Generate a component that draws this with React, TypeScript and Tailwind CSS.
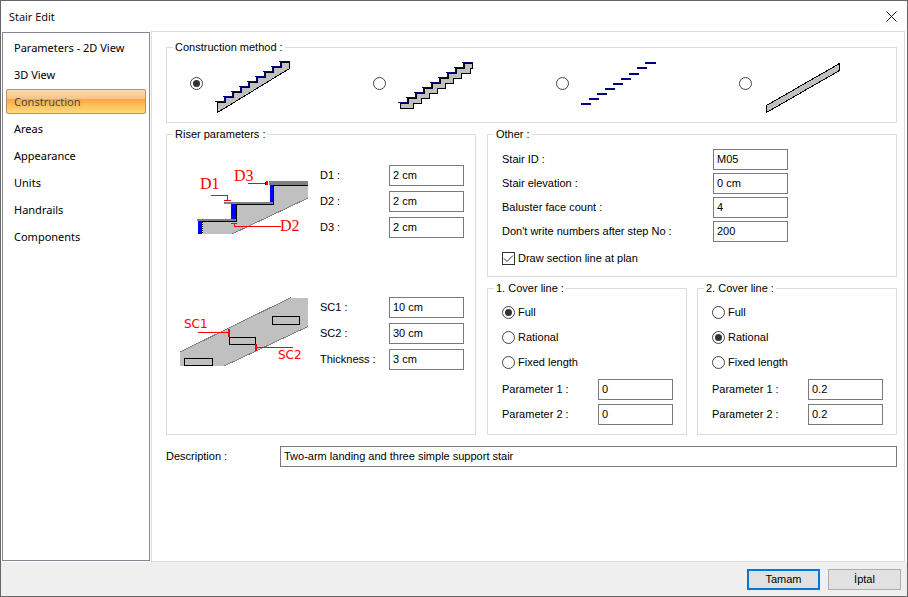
import { useState } from "react";
import type { ReactNode } from "react";

const PAGES = [
  "Parameters - 2D View",
  "3D View",
  "Construction",
  "Areas",
  "Appearance",
  "Units",
  "Handrails",
  "Components",
];

const RADIO =
  "grid size-[13px] shrink-0 appearance-none place-items-center rounded-full border border-[#444] bg-white before:size-[7px] before:rounded-full checked:before:bg-[#333]";

const STEPS = [0, 1, 2, 3, 4, 5, 6, 7, 8];

function Treads({ x, y }: { x: number; y: number }) {
  return (
    <>
      {STEPS.map((i) => (
        <g key={i}>
          <rect x={x + 2 + 8 * i} y={y + 1 - 5 * i} width="9" height="1" fill="#000" />
          <rect x={x + 8 * i} y={y - 5 * i} width="11" height="1" fill="#000080" />
          {i < 8 && <rect x={x + 9 + 8 * i} y={y - 4 - 5 * i} width="1" height="5" fill="#000080" />}
          {i < 8 && <rect x={x + 10 + 8 * i} y={y - 4 - 5 * i} width="1" height="6" fill="#000" />}
        </g>
      ))}
    </>
  );
}

const stairTop = (x: number, y: number) => STEPS.map((i) => `V${y - 5 * i}H${x + 8 * (i + 1)}`).join("");

const METHODS: { name: string; art: ReactNode }[] = [
  {
    name: "Sloped slab stair",
    art: (
      <>
        <path d={`M4 52V42${stairTop(4, 42)}V9Z`} fill="#c0c0c0" />
        <path d="M3.500 42V52.500L75.500 8.500V2" fill="none" stroke="#000" />
        <Treads x={1} y={41} />
      </>
    ),
  },
  {
    name: "Stepped slab stair",
    art: (
      <>
        <path
          d="M3.500 43.500V48.500H16.500V43.500H24.500V38.500H32.500V33.500H40.500V28.500H48.500V23.500H56.500V18.500H64.500V13.500H73.500V8.500H75.500V3.500H67.500V8.500H59.500V13.500H51.500V18.500H43.500V23.500H35.500V28.500H27.500V33.500H19.500V38.500H11.500V43.500Z"
          fill="#c0c0c0"
          stroke="#000"
        />
        <Treads x={1} y={42} />
      </>
    ),
  },
  {
    name: "Treads only",
    art: STEPS.map((i) => (
      <rect key={i} x={1 + 8 * i} y={i > 6 ? 42 - 5 * i : 43 - 5 * i} width={i === 8 ? 11 : 10} height="2" fill="#000080" />
    )),
  },
  {
    name: "Ramp",
    art: <path d="M3.500 45.500L76.500 3.500V10.500L3.500 52.500Z" fill="#c0c0c0" stroke="#000" />,
  },
];

function Group({ title, className, children }: { title: string; className: string; children: ReactNode }) {
  return (
    <fieldset className={`min-w-0 border border-[#dcdcdc] ${className}`}>
      <legend className="ml-[6px] px-[2px] leading-[15px]">{title}</legend>
      {children}
    </fieldset>
  );
}

function Field({ id, label, value, className }: { id: string; label: string; value: string; className: string }) {
  return (
    <div className={`flex items-center ${className}`}>
      <label htmlFor={id} className="flex-1 whitespace-nowrap">
        {label}
      </label>
      <input
        id={id}
        defaultValue={value}
        className="h-[21px] w-[75px] shrink-0 border border-[#7a7a7a] bg-white px-[3px] pb-[2px] outline-none"
      />
    </div>
  );
}

function RiserDrawing() {
  return (
    <svg width="130" height="76" viewBox="179 160 130 76" shapeRendering="crispEdges" aria-hidden="true">
      <path d="M203 234V221H236V204H274V185H308V198L232 234Z" fill="#c0c0c0" />
      <path d="M232 234L308 198" stroke="#808080" fill="none" />
      <rect x="197" y="219" width="40" height="2" fill="#808080" />
      <rect x="224" y="202" width="50" height="2" fill="#808080" />
      <rect x="269" y="181" width="39" height="4" fill="#808080" />
      <rect x="198" y="221" width="4" height="13" fill="#00f" />
      <rect x="231" y="204" width="5" height="15" fill="#00f" />
      <rect x="270" y="185" width="4" height="17" fill="#00f" />
      <path d="M202 221.500H237M236.500 204V222M236 204.500H274M273.500 185V205M274 185.500H308" stroke="#000" fill="none" />
      <path d="M202.500 222V234" stroke="#000" strokeDasharray="1 1" fill="none" />
      <path
        d="M211 195.500H227.500V200M224 200.500H231M248 183.500H266M231 223.500H237M234.500 223V226.500H281"
        stroke="#f00"
        fill="none"
      />
      <rect x="266" y="181" width="2" height="4" fill="#f00" />
      <rect x="265" y="182" width="1" height="3" fill="#00f" />
      <g fill="#f00" fontFamily="'Liberation Serif', serif" fontSize="16">
        <text x="200" y="189">D1</text>
        <text x="234" y="181">D3</text>
        <text x="280" y="231">D2</text>
      </g>
    </svg>
  );
}

function SectionDrawing() {
  return (
    <svg width="130" height="76" viewBox="179 293 130 76" shapeRendering="crispEdges" aria-hidden="true">
      <path d="M180 352L291 298H308V326L224 366H180Z" fill="#c0c0c0" />
      <path d="M180 352L291 297.500M308 326.500L224 366" stroke="#808080" fill="none" />
      <path d="M272.500 316.500H299.500V324.500H272.500ZM229.500 337.500H255.500V344.500H229.500ZM184.500 358.500H212.500V365.500H184.500Z" stroke="#000" fill="none" />
      <path d="M198 332.500H229M257 347.500H293" stroke="#f00" fill="none" />
      <rect x="228" y="329" width="2" height="8" fill="#f00" />
      <rect x="255" y="344" width="2" height="7" fill="#f00" />
      <g fill="#f00" fontFamily="'DejaVu Sans', sans-serif" fontSize="12">
        <text x="184" y="328">SC1</text>
        <text x="278" y="359">SC2</text>
      </g>
    </svg>
  );
}

function CoverLine({ n, selected, value }: { n: number; selected: string; value: string }) {
  return (
    <Group title={`${n}. Cover line :`} className="h-[154px]">
      <div className="flex flex-col gap-1 pt-[6px] pr-[13px] pl-[14px]">
        {["Full", "Rational", "Fixed length"].map((name) => (
          <label key={name} className="flex h-[21px] items-center gap-[3px]">
            <input type="radio" name={`cover-${n}`} defaultChecked={name === selected} className={RADIO} />
            {name}
          </label>
        ))}
        <Field id={`cover-${n}-p1`} label="Parameter 1 :" value={value} className="mt-[2px]" />
        <Field id={`cover-${n}-p2`} label="Parameter 2 :" value={value} className="" />
      </div>
    </Group>
  );
}

export default function App() {
  const [page, setPage] = useState("Construction");

  return (
    <div className="flex min-h-screen flex-col border border-[#666] bg-[#efefef] font-['Liberation_Sans',Arial,sans-serif] text-[11px] leading-[15px] text-black">
      <header className="flex h-[30px] shrink-0 items-center justify-between bg-white pr-[10px] pl-2 font-['Open_Sans',sans-serif]">
        <h1>Stair Edit</h1>
        <button type="button" aria-label="Close">
          <svg width="11" height="11" viewBox="0 0 11 11" stroke="#111" fill="none" aria-hidden="true">
            <path d="M0.500 0.500L10.500 10.500M10.500 0.500L0.500 10.500" />
          </svg>
        </button>
      </header>

      <div className="flex flex-1 bg-white">
        <nav className="mt-px mb-px ml-px w-[148px] shrink-0 border border-[#828790] px-[3px] pt-[2px] font-['Noto_Sans',sans-serif] text-[11px]">
          <ul className="flex flex-col gap-[2px]">
            {PAGES.map((name) => (
              <li key={name}>
                <button
                  type="button"
                  onClick={() => setPage(name)}
                  className={`block h-[25px] w-full rounded-[2px] border px-[7px] text-left whitespace-nowrap ${
                    name === page
                      ? "border-[#b8935a] bg-[linear-gradient(#f9d9b8,#fbc384_40%,#fba844_40%,#fedc78)] text-[#4a4a4a]"
                      : "border-transparent"
                  }`}
                >
                  {name}
                </button>
              </li>
            ))}
          </ul>
        </nav>

        <main className="ml-px mr-[2px] min-w-0 flex-1 border border-[#dcdcdc] pt-[8px] pr-[7px] pl-[14px]">
          <Group title="Construction method :" className="h-[83px]">
            <div className="grid grid-cols-4 gap-x-[3px]">
              {METHODS.map(({ name, art }, i) => (
                <label key={name} className="flex items-center gap-[11px] pl-[23px]">
                  <input type="radio" name="method" aria-label={name} defaultChecked={i === 0} className={RADIO} />
                  <svg
                    width="78"
                    height="57"
                    viewBox="0 -5 78 57"
                    shapeRendering="crispEdges"
                    className="overflow-visible"
                    aria-hidden="true"
                  >
                    {art}
                  </svg>
                </label>
              ))}
            </div>
          </Group>

          <div className="mt-1 grid grid-cols-[310px_1fr] gap-[11px]">
            <Group title="Riser parameters :" className="">
              <div className="flex flex-col gap-[55px] pt-[18px] pr-[11px] pl-[12px]">
                <div className="flex items-start gap-[11px]">
                  <RiserDrawing />
                  <div className="flex flex-1 flex-col gap-[5px] pt-[5px]">
                    <Field id="d1" label="D1 :" value="2 cm" className="" />
                    <Field id="d2" label="D2 :" value="2 cm" className="" />
                    <Field id="d3" label="D3 :" value="2 cm" className="" />
                  </div>
                </div>
                <div className="flex items-start gap-[11px]">
                  <SectionDrawing />
                  <div className="flex flex-1 flex-col gap-[5px] pt-[4px]">
                    <Field id="sc1" label="SC1 :" value="10 cm" className="" />
                    <Field id="sc2" label="SC2 :" value="30 cm" className="" />
                    <Field id="thickness" label="Thickness :" value="3 cm" className="" />
                  </div>
                </div>
              </div>
            </Group>

            <div className="flex min-w-0 flex-col gap-1">
              <Group title="Other :" className="h-[150px]">
                <div className="flex flex-col gap-[3px] pt-[7px] pl-[14px]">
                  <Field id="stair-id" label="Stair ID :" value="M05" className="w-[286px]" />
                  <Field id="elevation" label="Stair elevation :" value="0 cm" className="w-[286px]" />
                  <Field id="baluster" label="Baluster face count :" value="4" className="w-[286px]" />
                  <Field id="numbers" label="Don't write numbers after step No :" value="200" className="w-[286px]" />
                  <label className="mt-[3px] flex h-[21px] items-center gap-[3px]">
                    <span className="relative size-[13px]">
                      <input
                        type="checkbox"
                        defaultChecked
                        className="peer block size-[13px] appearance-none border border-[#333] bg-white"
                      />
                      <svg
                        className="pointer-events-none invisible absolute inset-0 peer-checked:visible"
                        viewBox="0 0 13 13"
                        fill="none"
                        stroke="#333"
                        aria-hidden="true"
                      >
                        <path d="M2 6.500L5 9.500L11 3.500" />
                      </svg>
                    </span>
                    Draw section line at plan
                  </label>
                </div>
              </Group>

              <div className="grid grid-cols-2 gap-[10px]">
                <CoverLine n={1} selected="Full" value="0" />
                <CoverLine n={2} selected="Rational" value="0.2" />
              </div>
            </div>
          </div>

          <div className="mt-[11px] flex items-center">
            <label htmlFor="description" className="w-[114px] shrink-0">
              Description :
            </label>
            <input
              id="description"
              defaultValue="Two-arm landing and three simple support stair"
              className="h-[21px] min-w-0 flex-1 border border-[#7a7a7a] bg-white px-[3px] pb-[2px] outline-none"
            />
          </div>
        </main>
      </div>

      <footer className="flex h-[34px] shrink-0 items-center justify-end gap-2 pr-[6px]">
        <button type="button" className="h-[21px] w-[73px] border-2 border-[#0078d7] bg-[#e1e1e1] leading-none">
          Tamam
        </button>
        <button type="button" className="h-[21px] w-[73px] border border-[#adadad] bg-[#e1e1e1] leading-none">
          İptal
        </button>
      </footer>
    </div>
  );
}
